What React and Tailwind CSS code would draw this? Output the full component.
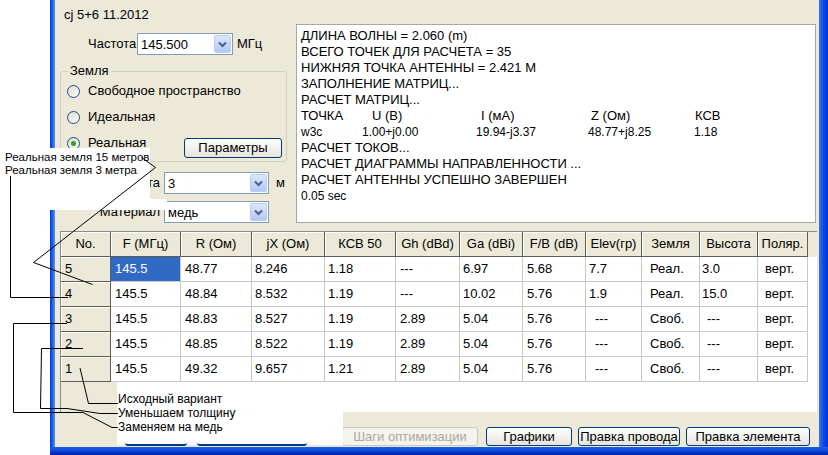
import React from 'react';

const colWidths = ['w-[50px]', 'w-[70px]', 'w-[71px]', 'w-[73px]', 'w-[71px]', 'w-[64px]', 'w-[63px]', 'w-[63px]', 'w-[56px]', 'w-[58px]', 'w-[58px]', 'w-[50px]'];
const colPad = ['pl-[4px]', 'pl-[4px]', 'pl-[4px]', 'pl-[3px]', 'pl-[3px]', 'pl-[4px]', 'pl-[3px]', 'pl-[4px]', 'pl-[3px]', 'pl-[8px]', 'pl-[2px]', 'pl-[7px]'];
const dashPad = ['pl-[4px]', 'pl-[4px]', 'pl-[4px]', 'pl-[3px]', 'pl-[3px]', 'pl-[4px]', 'pl-[3px]', 'pl-[4px]', 'pl-[9px]', 'pl-[8px]', 'pl-[7px]', 'pl-[7px]'];

const headers = ['No.', 'F (МГц)', 'R (Ом)', 'jX (Ом)', 'КСВ 50', 'Gh (dBd)', 'Ga (dBi)', 'F/B (dB)', 'Elev(гр)', 'Земля', 'Высота', 'Поляр.'];

const rows = [
  ['5', '145.5', '48.77', '8.246', '1.18', '---', '6.97', '5.68', '7.7', 'Реал.', '3.0', 'верт.'],
  ['4', '145.5', '48.84', '8.532', '1.19', '---', '10.02', '5.76', '1.9', 'Реал.', '15.0', 'верт.'],
  ['3', '145.5', '48.83', '8.527', '1.19', '2.89', '5.04', '5.76', '---', 'Своб.', '---', 'верт.'],
  ['2', '145.5', '48.85', '8.522', '1.19', '2.89', '5.04', '5.76', '---', 'Своб.', '---', 'верт.'],
  ['1', '145.5', '49.32', '9.657', '1.21', '2.89', '5.04', '5.76', '---', 'Своб.', '---', 'верт.'],
];

const Combo = ({ value, width }) => (
  <div className={`flex h-[22px] items-center border border-[#7f9db9] bg-white ${width}`}>
    <span className="flex-1 pl-[3px] text-[13px] leading-none">{value}</span>
    <div className="mr-[1px] flex h-[18px] w-[17px] items-center justify-center rounded-[2px] border border-[#bccdf5] bg-gradient-to-b from-[#dce7fe] to-[#b4c8f5]">
      <svg width="9" height="7" viewBox="0 0 9 7">
        <path d="M1 1.5l3.5 3.5L8 1.5" stroke="#4d6185" strokeWidth="2" fill="none" />
      </svg>
    </div>
  </div>
);

const Radio = ({ checked, label }) => (
  <div className="flex h-[26px] items-center">
    <div className="ml-[6px] flex h-[13px] w-[13px] items-center justify-center rounded-full border border-[#1c5180] bg-gradient-to-br from-[#dcd9cd] to-white">
      {checked && <div className="h-[5px] w-[5px] rounded-full bg-[#2ba32b]" />}
    </div>
    <span className="ml-[8px] text-[13px]">{label}</span>
  </div>
);

const XpButton = ({ children, className }) => (
  <div className={`flex items-center justify-center rounded-[3px] border border-[#003c74] bg-gradient-to-b from-white to-[#e6e4da] text-[13px] text-black ${className}`}>
    {children}
  </div>
);

const App = () => {
  return (
    <div className="relative h-[455px] w-[828px] overflow-hidden bg-white pl-[50px] font-['Liberation_Sans',Arial,sans-serif] text-black">
      <div className="flex h-[455px] w-[778px] flex-col">
        <div className="flex h-[447px]">
          <div className="w-[5px] bg-gradient-to-r from-[#0831d9] via-[#1a64ee] to-[#5f8ce8]" />

          <div className="flex w-[764px] flex-col bg-[#ece9d8]">
            {/* top: settings + log */}
            <div className="flex h-[231px]">
              <div className="flex w-[241px] flex-col">
                <div className="ml-[9px] mt-[7px] h-[16px] text-[13px] leading-[16px]">cj 5+6 11.2012</div>
                <div className="mt-[10px] flex h-[22px] items-center">
                  <span className="ml-[33px] w-[49px] text-[13px]">Частота</span>
                  <Combo value="145.500" width="w-[96px]" />
                  <span className="ml-[4px] text-[13px]">МГц</span>
                </div>
                <fieldset className="ml-[5px] mt-[9px] h-[98px] w-[227px] rounded-[3px] border border-[#d0d0bf] pb-[6px]">
                  <legend className="ml-[7px] px-[2px] text-[13px] leading-[14px]">Земля</legend>
                  <Radio label="Свободное пространство" />
                  <Radio label="Идеальная" />
                  <div className="flex items-start">
                    <Radio checked label="Реальная" />
                    <XpButton className="ml-auto mr-[4px] mt-[8px] h-[20px] w-[98px]">Параметры</XpButton>
                  </div>
                </fieldset>
                <div className="mt-[10px] flex h-[22px] items-center">
                  <span className="w-[109px] pr-[4px] text-right text-[13px]">Высота</span>
                  <Combo value="3" width="w-[105px]" />
                  <span className="ml-[7px] text-[13px]">м</span>
                </div>
                <div className="mt-[7px] flex h-[22px] items-center">
                  <span className="w-[109px] pr-[4px] text-right text-[13px]">Материал</span>
                  <Combo value="медь" width="w-[105px]" />
                </div>
              </div>

              <div className="mt-[24px] h-[199px] w-[520px] border border-[#a7a6aa] bg-white pl-[4px] pt-[3px] text-[13px] leading-[16px]">
                <div>ДЛИНА ВОЛНЫ = 2.060 (m)</div>
                <div>ВСЕГО ТОЧЕК ДЛЯ РАСЧЕТА = 35</div>
                <div>НИЖНЯЯ ТОЧКА АНТЕННЫ = 2.421 М</div>
                <div>ЗАПОЛНЕНИЕ МАТРИЦ...</div>
                <div>РАСЧЕТ МАТРИЦ...</div>
                <div className="flex">
                  <span className="w-[71px]">ТОЧКА</span>
                  <span className="w-[109px]">U (В)</span>
                  <span className="w-[110px]">I (мА)</span>
                  <span className="w-[104px]">Z (Ом)</span>
                  <span>КСВ</span>
                </div>
                <div className="flex text-[12px]">
                  <span className="w-[61px]">w3c</span>
                  <span className="w-[114px]">1.00+j0.00</span>
                  <span className="w-[112px]">19.94-j3.37</span>
                  <span className="w-[106px]">48.77+j8.25</span>
                  <span>1.18</span>
                </div>
                <div>РАСЧЕТ ТОКОВ...</div>
                <div>РАСЧЕТ ДИАГРАММЫ НАПРАВЛЕННОСТИ ...</div>
                <div>РАСЧЕТ АНТЕННЫ УСПЕШНО ЗАВЕРШЕН</div>
                <div className="text-[12px]">0.05 sec</div>
              </div>
            </div>

            {/* results grid */}
            <div className="ml-[5px] flex h-[181px] w-[757px] flex-col border-l border-t border-[#8d8c84]">
              <div className="flex h-[25px]">
                {headers.map((h, i) => (
                  <div
                    key={h}
                    className={`flex items-center justify-center border-b border-r border-[#5f5d55] bg-[#ece9d8] text-[13px] shadow-[inset_1px_1px_0_#ffffff] ${colWidths[i]}`}
                  >
                    {h}
                  </div>
                ))}
                <div className="flex-1 bg-[#ece9d8]" />
              </div>
              {rows.map((r) => (
                <div key={r[0]} className="flex h-[25px] bg-white">
                  {r.map((v, i) => {
                    if (i === 0) {
                      return (
                        <div
                          key={i}
                          className={`flex items-center border-b border-r border-[#5f5d55] bg-[#ece9d8] pl-[4px] text-[13px] shadow-[inset_1px_1px_0_#ffffff] ${colWidths[i]}`}
                        >
                          {v}
                        </div>
                      );
                    }
                    const selected = r[0] === '5' && i === 1;
                    return (
                      <div
                        key={i}
                        className={`flex items-center border-b border-r border-[#c8c8c8] text-[13px] ${colWidths[i]} ${v === '---' ? dashPad[i] : colPad[i]} ${selected ? 'bg-[#316ac5] text-white' : ''}`}
                      >
                        {v}
                      </div>
                    );
                  })}
                  <div className="flex-1" />
                </div>
              ))}
              <div className="flex flex-1">
                <div className="w-[56px] bg-[#ece9d8]" />
                <div className="flex-1 bg-white" />
              </div>
            </div>

            {/* bottom buttons */}
            <div className="flex h-[35px] pt-[15px]">
              <div className="ml-[287px] flex h-[19px] w-[136px] items-center justify-center rounded-[3px] border border-[#c9c7ba] bg-[#f4f3ee] text-[13px] text-[#aca899]">
                Шаги оптимизации
              </div>
              <XpButton className="ml-[8px] h-[19px] w-[86px]">Графики</XpButton>
              <XpButton className="ml-[6px] h-[19px] w-[102px]">Правка провода</XpButton>
              <XpButton className="ml-[6px] h-[19px] w-[124px]">Правка элемента</XpButton>
            </div>
          </div>

          <div className="w-[9px] bg-gradient-to-r from-[#3b72e6] via-[#0a4be0] to-[#0831d9]" />
        </div>
        <div className="h-[8px] bg-gradient-to-b from-[#1a5fe8] via-[#0a46d8] to-[#0019a8]" />
      </div>

      {/* annotations pasted over the screenshot */}
      <div className="pointer-events-none absolute inset-0">
        <div className="absolute left-0 top-[148px] h-[62px] w-[150px] bg-white">
          <div className="ml-[5px] mt-[3px] whitespace-nowrap text-[11.5px] leading-[13px]">Реальная земля 15 метров</div>
          <div className="ml-[5px] whitespace-nowrap text-[11.5px] leading-[13px]">Реальная земля 3 метра</div>
        </div>
        <div className="absolute left-[150px] top-[199px] h-[11px] w-[17px] bg-white" />
        <div className="absolute left-[117px] top-[382px] h-[63px] w-[226px] bg-white pt-[10px]">
          <div className="pl-[1px] text-[12px] leading-[14px]">Исходный вариант</div>
          <div className="pl-[1px] text-[12px] leading-[14px]">Уменьшаем толщину</div>
          <div className="pl-[1px] text-[12px] leading-[14px]">Заменяем на медь</div>
        </div>
        <div className="absolute left-[125px] top-[443px] h-[3px] w-[62px] rounded-b-[3px] border-b-2 border-[#003c74]" />
        <div className="absolute left-[197px] top-[443px] h-[3px] w-[110px] rounded-b-[3px] border-b-2 border-[#003c74]" />
        <svg className="absolute left-0 top-0" width="828" height="455" viewBox="0 0 828 455">
          <g stroke="#000" strokeWidth="1" fill="none">
            <polyline points="141.5,157.5 155.5,167.5 33.5,262.5 92.5,284.5" />
            <polyline points="10.5,176 10.5,297.5 68,297.5" />
            <polyline points="67,323.5 13.5,323.5 13.5,412.5 83,412.5 112,427.5 118,427.5" />
            <polyline points="83,348.5 41.5,348.5 40.5,408.5 67,408.5 100,413.5 118,413.5" />
            <polyline points="80,368 88.5,403.5 118,403.5" />
          </g>
        </svg>
      </div>
    </div>
  );
};

export default App;
